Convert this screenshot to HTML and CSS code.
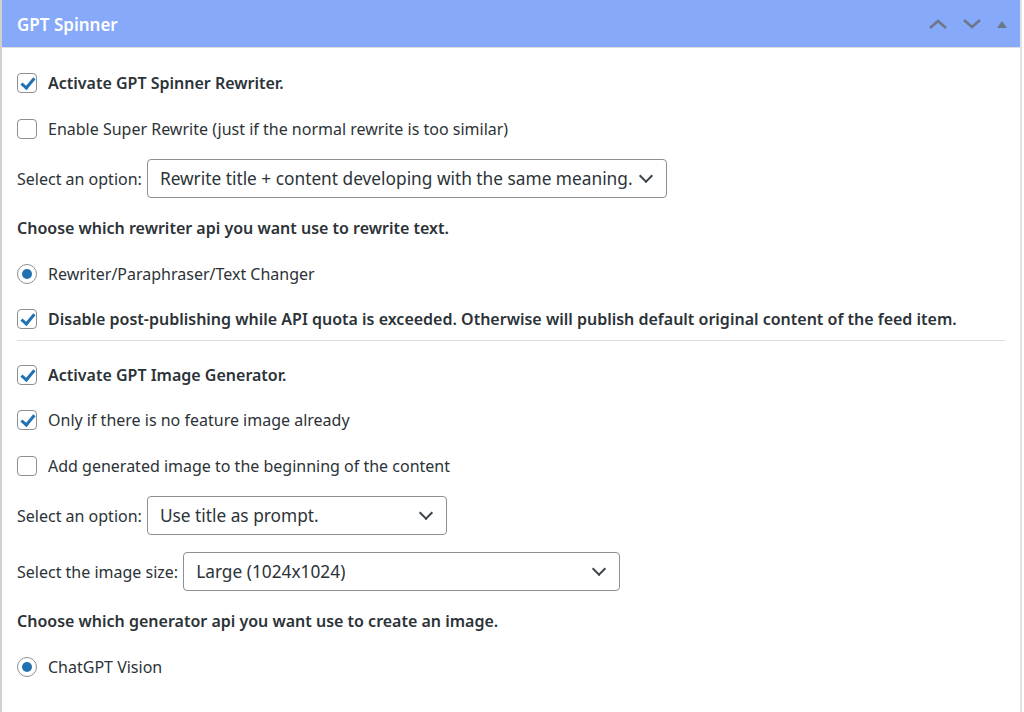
FILE: index.html
```html
<!DOCTYPE html>
<html lang="en">
<head>
    <meta charset="UTF-8">
    <meta name="viewport" content="width=device-width, initial-scale=1.0">
    <title>GPT Spinner</title>
    <link rel="stylesheet" href="styles.css">
</head>
<body>
    <div class="postbox">
        <div class="postbox-header">
            <h2>GPT Spinner</h2>
            <div class="handle-actions">
                <svg width="20" height="12" viewBox="0 0 20 12"><path d="M2 10 L10 3 L18 10" fill="none" stroke="#6e7787" stroke-width="2.6"/></svg>
                <svg width="20" height="12" viewBox="0 0 20 12"><path d="M2 2 L10 9 L18 2" fill="none" stroke="#6e7787" stroke-width="2.6"/></svg>
                <svg width="12" height="10" viewBox="0 0 12 10"><path d="M1 9 L6 2 L11 9 Z" fill="#6e7787"/></svg>
            </div>
        </div>

        <div class="inside">
            <div class="row bold"><span class="check on"></span>Activate GPT Spinner Rewriter.</div>
            <div class="row"><span class="check"></span>Enable Super Rewrite (just if the normal rewrite is too similar)</div>
            <div class="row select-row">
                <span class="label">Select an option:</span>
                <div class="select w-520"><span>Rewrite title + content developing with the same meaning.</span><i class="chev"></i></div>
            </div>
            <div class="row bold">Choose which rewriter api you want use to rewrite text.</div>
            <div class="row"><span class="radio on"></span>Rewriter/Paraphraser/Text Changer</div>
            <div class="row bold"><span class="check on"></span>Disable post-publishing while API quota is exceeded. Otherwise will publish default original content of the feed item.</div>

            <hr class="sep">

            <div class="row bold"><span class="check on"></span>Activate GPT Image Generator.</div>
            <div class="row"><span class="check on"></span>Only if there is no feature image already</div>
            <div class="row"><span class="check"></span>Add generated image to the beginning of the content</div>
            <div class="row select-row">
                <span class="label">Select an option:</span>
                <div class="select w-300"><span>Use title as prompt.</span><i class="chev"></i></div>
            </div>
            <div class="row select-row">
                <span class="label">Select the image size:</span>
                <div class="select w-437"><span>Large (1024x1024)</span><i class="chev"></i></div>
            </div>
            <div class="row bold">Choose which generator api you want use to create an image.</div>
            <div class="row"><span class="radio on"></span>ChatGPT Vision</div>
        </div>
    </div>
</body>
</html>
```

FILE: styles.css
```css
body {
    margin: 0;
    padding: 0;
    background: #fff;
    font-family: 'Noto Sans', 'Open Sans', sans-serif;
    font-size: 16px;
    color: #2c3338;
}
.postbox {
    width: 1022px;
    height: 712px;
    box-sizing: border-box;
    border-left: 2px solid #d0d0d0;
    border-right: 2px solid #e2e2e2;
}
.postbox-header {
    height: 48px;
    background: #86a9f9;
    border-bottom: 1px solid #dcdcde;
    display: flex;
    align-items: center;
    justify-content: space-between;
    padding: 1px 12px 0 15px;
    box-sizing: border-box;
}
.postbox-header h2 {
    margin: 0;
    color: #fff;
    font-size: 17px;
    font-weight: 600;
}
.handle-actions {
    display: flex;
    align-items: center;
    gap: 14px;
}
.inside {
    padding: 23px 15px 0 15px;
}
.row {
    display: flex;
    align-items: center;
    height: 24px;
    margin-bottom: 21.5px;
    white-space: nowrap;
}
.bold {
    font-weight: 600;
}
.check, .radio {
    width: 20px;
    height: 20px;
    box-sizing: border-box;
    border: 1px solid #8c8f94;
    margin-right: 11px;
    flex-shrink: 0;
    position: relative;
}
.check {
    border-radius: 4px;
}
.check.on::after {
    content: '';
    position: absolute;
    left: 6px;
    top: 1px;
    width: 5px;
    height: 11px;
    border: solid #2271b1;
    border-width: 0 3px 3px 0;
    transform: rotate(40deg);
}
.radio {
    border-radius: 50%;
}
.radio.on::after {
    content: '';
    position: absolute;
    left: 4px;
    top: 4px;
    width: 10px;
    height: 10px;
    border-radius: 50%;
    background: #2271b1;
}
.select-row {
    height: 39px;
    margin-top: -3px;
    margin-bottom: 18px;
}
.select-row + .select-row {
    margin-top: -1px;
}
.label {
    margin-right: 5px;
}
.select {
    height: 39px;
    box-sizing: border-box;
    border: 1px solid #8c8f94;
    border-radius: 4px;
    display: flex;
    align-items: center;
    justify-content: space-between;
    padding: 0 15px 0 12px;
    font-size: 17.3px;
}
.select span {
    overflow: hidden;
}
.w-520 { width: 520px; }
.w-300 { width: 300px; }
.w-437 { width: 437px; }
.chev {
    flex-shrink: 0;
    width: 8px;
    height: 8px;
    border: solid #3c434a;
    border-width: 0 2px 2px 0;
    transform: rotate(45deg);
    margin-top: -5px;
    margin-left: 8px;
}
.sep {
    border: 0;
    border-top: 1px solid #dcdcde;
    margin: -13px 0 22px 0;
}
```
